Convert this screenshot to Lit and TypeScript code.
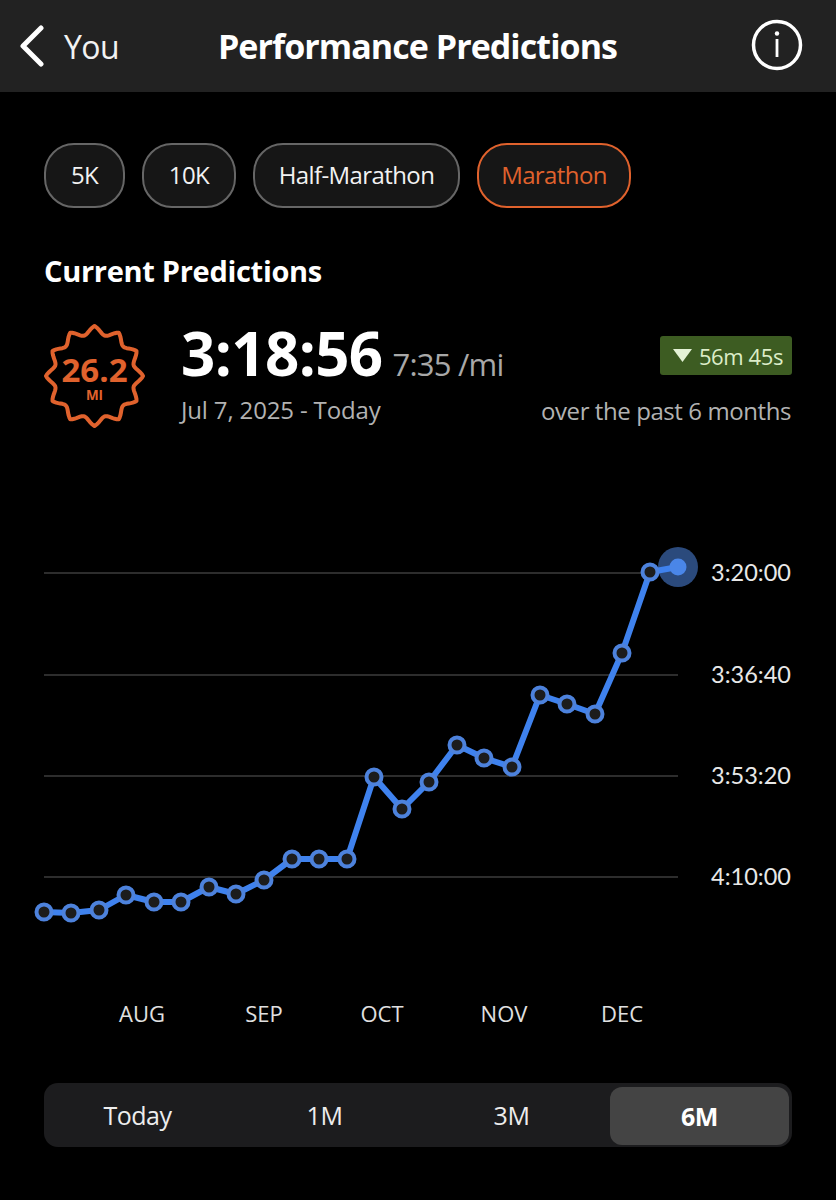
import { LitElement, css, html, svg } from 'lit'
import { customElement } from 'lit/decorators.js'

const POINTS = [
	[44, 912], [71, 913], [99, 910], [126, 895], [154, 902], [181, 902], [209, 887], [236, 894],
	[264, 880], [292, 859], [319, 859], [347, 859], [374, 777], [402, 809], [429, 782], [457, 745],
	[484, 758], [512, 767], [540, 695], [567, 704], [595, 714], [622, 653], [650, 572],
]
const LAST = [678, 567]
const CHART_TOP = 530

const GRID = [
	{ y: 573, label: '3:20:00' },
	{ y: 675, label: '3:36:40' },
	{ y: 776, label: '3:53:20' },
	{ y: 877, label: '4:10:00' },
]
const MONTHS = [
	{ x: 142, label: 'AUG' },
	{ x: 264, label: 'SEP' },
	{ x: 382, label: 'OCT' },
	{ x: 504, label: 'NOV' },
	{ x: 622, label: 'DEC' },
]

// wavy 12 point outline, tips a bit sharper than a plain sine
function badgeOutline() {
	const pts: string[] = []
	for (let i = 0; i < 360; i += 2) {
		const a = (i * Math.PI) / 180
		const wave = 0.5 * (0.5 + 0.5 * Math.cos(12 * a)) + 0.5 * (1 - Math.abs(Math.sin(6 * a)))
		const r = 40.5 + 8 * wave
		const x = 50.5 + r * Math.sin(a)
		const y = 52 - r * 1.03 * Math.cos(a)
		pts.push(`${x.toFixed(2)},${y.toFixed(2)}`)
	}
	return pts.join(' ')
}

@customElement('app-root')
export class AppRoot extends LitElement {
	static styles = css`
		:host {
			display: block;
			width: 836px;
			height: 1200px;
			background: #000;
			color: #fff;
			font-family: 'Open Sans', 'Noto Sans', sans-serif;
			overflow: hidden;
		}

		.nav {
			height: 92px;
			background: #222222;
			display: grid;
			grid-template-columns: 1fr auto 1fr;
			align-items: center;
			padding: 0 33px 0 20px;
		}

		.nav-back {
			display: flex;
			align-items: center;
			gap: 20px;
			font-size: 32px;
			letter-spacing: -0.6px;
			color: #f2f2f2;
		}

		.nav-title {
			font-size: 34px;
			font-weight: 700;
			letter-spacing: -0.95px;
			transform: translateX(6px);
		}

		.nav-info {
			justify-self: end;
			display: block;
			margin-bottom: 2px;
		}

		.pills {
			display: flex;
			gap: 17px;
			padding: 51px 44px 0;
		}

		.pill {
			height: 65px;
			box-sizing: border-box;
			display: flex;
			align-items: center;
			justify-content: center;
			padding-bottom: 2px;
			border: 2px solid #666;
			border-radius: 30px;
			background: #161616;
			font-size: 24px;
			letter-spacing: -0.6px;
			color: #f2f2f2;
		}

		.pill.active {
			border-color: #e0622d;
			color: #e0622d;
		}

		h2 {
			margin: 44px 44px 0;
			font-size: 29px;
			line-height: 38px;
			font-weight: 700;
			letter-spacing: -0.3px;
		}

		.summary {
			display: flex;
			align-items: flex-start;
			margin: 34px 44px 0 44px;
			height: 103px;
		}

		.medal {
			display: block;
			width: 102px;
			height: 104px;
			flex: none;
		}

		.medal text {
			fill: #e0622d;
			font-weight: 700;
			text-anchor: middle;
		}

		.figures {
			margin-left: 35px;
			flex: 1;
		}

		.figures-top {
			display: flex;
			align-items: baseline;
			gap: 10px;
			height: 58px;
		}

		.time {
			font-size: 60px;
			line-height: 58px;
			font-weight: 700;
			letter-spacing: -0.6px;
		}

		.pace {
			font-size: 31px;
			letter-spacing: -0.8px;
			color: #a8a8a8;
		}

		.date,
		.period {
			font-size: 24px;
			line-height: 32px;
			color: #b2b2b2;
		}

		.date {
			margin-top: 12px;
			letter-spacing: -0.15px;
		}

		.period {
			margin: 20px 1px 0 0;
			letter-spacing: -0.42px;
		}

		.change {
			display: flex;
			flex-direction: column;
			align-items: flex-end;
		}

		.delta {
			display: flex;
			align-items: center;
			gap: 7px;
			height: 39px;
			box-sizing: border-box;
			margin-top: 12px;
			padding: 0 9px 0 13px;
			border-radius: 3px;
			background: #3d5c22;
			color: #dcedc8;
			font-size: 22px;
			letter-spacing: -0.4px;
		}

		.delta svg {
			display: block;
		}

		.chart {
			display: block;
			margin-top: 103px;
		}

		.chart .axis {
			font-family: 'Lato', 'Open Sans', sans-serif;
			font-size: 23.5px;
			fill: #e8e8e8;
		}

		.chart .month {
			font-family: 'Open Sans', sans-serif;
			font-size: 22px;
			fill: #e0e0e0;
			text-anchor: middle;
		}

		.range {
			display: grid;
			grid-template-columns: repeat(4, 1fr);
			height: 64px;
			margin: 43px 44px 0;
			border-radius: 14px;
			background: #1c1c1e;
			font-size: 25px;
			letter-spacing: -0.5px;
			color: #ededed;
		}

		.range div {
			display: flex;
			align-items: center;
			justify-content: center;
		}

		.range .active {
			margin: 4px 3px 2px 5px;
			border-radius: 12px;
			background: #444444;
			font-weight: 700;
			color: #fff;
		}
	`

	render() {
		return html`
			<header class="nav">
				<div class="nav-back">
					<svg width="24" height="42" viewBox="0 0 24 42" fill="none">
						<polyline points="21,3 3,21 21,39" stroke="#fff" stroke-width="5" stroke-linecap="round" stroke-linejoin="round" />
					</svg>
					<span>You</span>
				</div>
				<div class="nav-title">Performance Predictions</div>
				<svg class="nav-info" width="52" height="52" viewBox="0 0 52 52" fill="none">
					<circle cx="26" cy="26" r="23.5" stroke="#fff" stroke-width="3.5" />
					<rect x="24.6" y="20" width="2.8" height="18" fill="#fff" />
					<circle cx="26" cy="14.5" r="2.2" fill="#fff" />
				</svg>
			</header>

			<div class="pills">
				<div class="pill" style="width:81px">5K</div>
				<div class="pill" style="width:94px">10K</div>
				<div class="pill" style="width:207px">Half-Marathon</div>
				<div class="pill active" style="width:154px">Marathon</div>
			</div>

			<h2>Current Predictions</h2>

			<section class="summary">
				<svg class="medal" viewBox="0 0 102 104" fill="none">
					<polygon points=${badgeOutline()} stroke="#e0622d" stroke-width="4" stroke-linejoin="round" />
					<text x="50.5" y="58" font-size="33">26.2</text>
					<text x="50.5" y="76" font-size="13.5">MI</text>
				</svg>
				<div class="figures">
					<div class="figures-top">
						<span class="time">3:18:56</span>
						<span class="pace">7:35 /mi</span>
					</div>
					<div class="date">Jul 7, 2025 - Today</div>
				</div>
				<div class="change">
					<div class="delta">
						<svg width="19" height="13" viewBox="0 0 19 13"><polygon points="0,0 19,0 9.5,13" fill="#e4f2d6" /></svg>
						<span>56m 45s</span>
					</div>
					<div class="period">over the past 6 months</div>
				</div>
			</section>

			${this.renderChart()}

			<div class="range">
				<div>Today</div>
				<div>1M</div>
				<div>3M</div>
				<div class="active">6M</div>
			</div>
		`
	}

	renderChart() {
		const line = [...POINTS, LAST].map((p) => p.join(',')).join(' ')
		return html`
			<svg class="chart" width="836" height="510" viewBox="0 ${CHART_TOP} 836 510" fill="none">
				${GRID.map(
					(g) => svg`
						<line x1="44" x2="678" y1=${g.y} y2=${g.y} stroke="#3c3c3c" stroke-width="1.5" />
						<text class="axis" x="711" y=${g.y + 8}>${g.label}</text>
					`,
				)}
				<circle cx=${LAST[0]} cy=${LAST[1]} r="20" fill="#2b4a7c" />
				<polyline points=${line} stroke="#3f82ee" stroke-width="6" stroke-linejoin="round" />
				${POINTS.map(
					(p) => svg`<circle cx=${p[0]} cy=${p[1]} r="7.5" fill="#1c1c1c" stroke="#4d82dc" stroke-width="4" />`,
				)}
				<circle cx=${LAST[0]} cy=${LAST[1]} r="8.5" fill="#4a86e8" />
				${MONTHS.map((m) => svg`<text class="month" x=${m.x} y="1022">${m.label}</text>`)}
			</svg>
		`
	}
}
